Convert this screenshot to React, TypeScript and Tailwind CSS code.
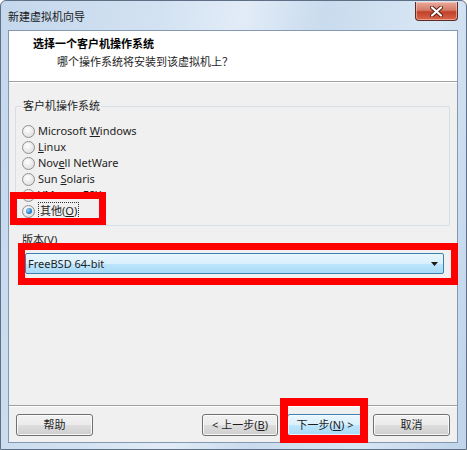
import React from "react";

const FONT = "font-['Noto_Sans','Noto_Sans_CJK_SC',sans-serif]";

function Radio({ label, checked }: { label: React.ReactNode; checked?: boolean }) {
  return (
    <div className="flex items-center h-[16px]">
      <span className="w-[13px] h-[13px] rounded-full border border-[#8e8f8f] bg-[radial-gradient(circle_at_40%_35%,#ffffff,#e6e6e6_60%,#d2d2d2)] flex items-center justify-center shrink-0">
        {checked && (
          <span className="w-[6px] h-[6px] rounded-full bg-[radial-gradient(circle_at_35%_35%,#9ad8ff,#2d85cf_55%,#0f4f8e)]" />
        )}
      </span>
      <span className="ml-[3px] text-[11px] leading-[16px] text-[#1e1e1e]">{label}</span>
    </div>
  );
}

function Btn({ children, def, className = "" }: { children: React.ReactNode; def?: boolean; className?: string }) {
  return (
    <div
      className={
        "h-[22px] flex items-center justify-center rounded-[3px] border text-[11px] text-[#1e1e1e] " +
        (def
          ? "border-[#3c7fb1] bg-[linear-gradient(#eaf6fd_0%,#d9f0fc_50%,#bee6fd_51%,#a7d9f5_100%)] shadow-[inset_0_0_0_1px_rgba(255,255,255,0.7)] "
          : "border-[#707070] bg-[linear-gradient(#f2f2f2_0%,#ebebeb_50%,#dddddd_51%,#cfcfcf_100%)] shadow-[inset_0_0_0_1px_rgba(255,255,255,0.8)] ") +
        className
      }
    >
      {children}
    </div>
  );
}

export default function App() {
  return (
    <div className={"relative w-[467px] h-[450px] bg-white overflow-hidden " + FONT}>
      <div className="w-full h-full rounded-t-[6px] border border-[#5f7086] bg-[linear-gradient(100deg,#c4d7ec_0%,#d3e2f2_30%,#e2ecf7_45%,#c9dbee_60%,#d8e6f4_80%,#bfd4ea_100%)] flex flex-col">
        {/* Title bar */}
        <div className="h-[29px] flex items-start justify-between shrink-0">
          <div className="pl-[7px] pt-[8px] text-[11px] leading-[16px] text-[#1a1a1a]">新建虚拟机向导</div>
          <div className="mt-[1px] mr-[8px] w-[43px] h-[19px] rounded-b-[4px] border border-[#5c2a24] border-t-0 bg-[linear-gradient(#e9a99b_0%,#d47c67_45%,#c2412a_55%,#d9654b_100%)] flex items-center justify-center shadow-[inset_0_0_0_1px_rgba(255,220,210,0.5)]">
            <svg width="13" height="11" viewBox="0 0 13 11">
              <path d="M2 1.5 L11 9.5 M11 1.5 L2 9.5" stroke="#5a1e15" strokeWidth="4" strokeLinecap="round" />
              <path d="M2 1.5 L11 9.5 M11 1.5 L2 9.5" stroke="#ffffff" strokeWidth="2.2" strokeLinecap="round" />
            </svg>
          </div>
        </div>

        {/* Content */}
        <div className="flex-1 ml-[7px] mr-[8px] mb-[6px] border border-[#8498b1] flex flex-col bg-[#f0f0f0]">
          {/* Header */}
          <div className="h-[50px] bg-white pt-[5px] shrink-0">
            <div className="pl-[24px] text-[11px] leading-[16px] font-bold text-black">选择一个客户机操作系统</div>
            <div className="pl-[48px] mt-[2px] text-[11px] leading-[16px] text-[#1e1e1e]">哪个操作系统将安装到该虚拟机上？</div>
          </div>
          <div className="h-[2px] border-t border-[#a0a0a0] bg-white shrink-0" />

          {/* Body */}
          <div className="flex-1 flex flex-col">
            <fieldset className="mt-[15px] ml-[6px] mr-[7px] border border-[#d5dfe5] rounded-[2px] px-[6px] pt-[9px] pb-[6px]">
              <legend className="ml-[0px] px-[1px] text-[11px] leading-[16px] text-[#1e1e1e]">客户机操作系统</legend>
              <Radio label={<>Microsoft <u>W</u>indows</>} />
              <Radio label={<><u>L</u>inux</>} />
              <Radio label={<>Nov<u>e</u>ll NetWare</>} />
              <Radio label={<>Sun <u>S</u>olaris</>} />
              <Radio label={<>VMware ESX</>} />
              <Radio
                checked
                label={<span className="border border-dotted border-[#333] px-[1px]">其他(<u>O</u>)</span>}
              />
            </fieldset>

            <div className="mt-[6px] ml-[13px] text-[11px] leading-[16px] text-[#1e1e1e]">
              版本(<u>V</u>)
            </div>
            <div className="mt-[5px] ml-[16px] mr-[13px] h-[21px] rounded-[2px] border border-[#3c7fb1] bg-[linear-gradient(#eaf6fd_0%,#d9f0fc_50%,#bee6fd_51%,#a7d9f5_100%)] flex items-center justify-between pl-[2px] pr-[5px]">
              <span className="text-[11px] leading-[16px] text-[#1e1e1e]">FreeBSD 64-bit</span>
              <svg width="7" height="4" viewBox="0 0 7 4">
                <path d="M0 0 L7 0 L3.5 4 Z" fill="#1a1a1a" />
              </svg>
            </div>

            <div className="flex-1" />

            <div className="h-[2px] border-t border-[#a0a0a0] bg-white" />
            <div className="pt-[7px] pb-[6px] flex items-center">
              <Btn className="ml-[7px] w-[77px]">帮助</Btn>
              <div className="flex-1" />
              <Btn className="w-[76px]">&lt; 上一步(<u>B</u>)</Btn>
              <Btn def className="ml-[9px] w-[76px]">下一步(<u>N</u>) &gt;</Btn>
              <Btn className="ml-[10px] mr-[7px] w-[77px]">取消</Btn>
            </div>
          </div>
        </div>
      </div>

      {/* Red annotation boxes */}
      <div className="absolute left-[10px] top-[192px] w-[96px] h-[33px] border-[7px] border-[#ff0000]" />
      <div className="absolute left-[18px] top-[243px] w-[440px] h-[42px] border-[7px] border-[#ff0000]" />
      <div className="absolute left-[280px] top-[398px] w-[88px] h-[45px] border-[8px] border-[#ff0000]" />
    </div>
  );
}
